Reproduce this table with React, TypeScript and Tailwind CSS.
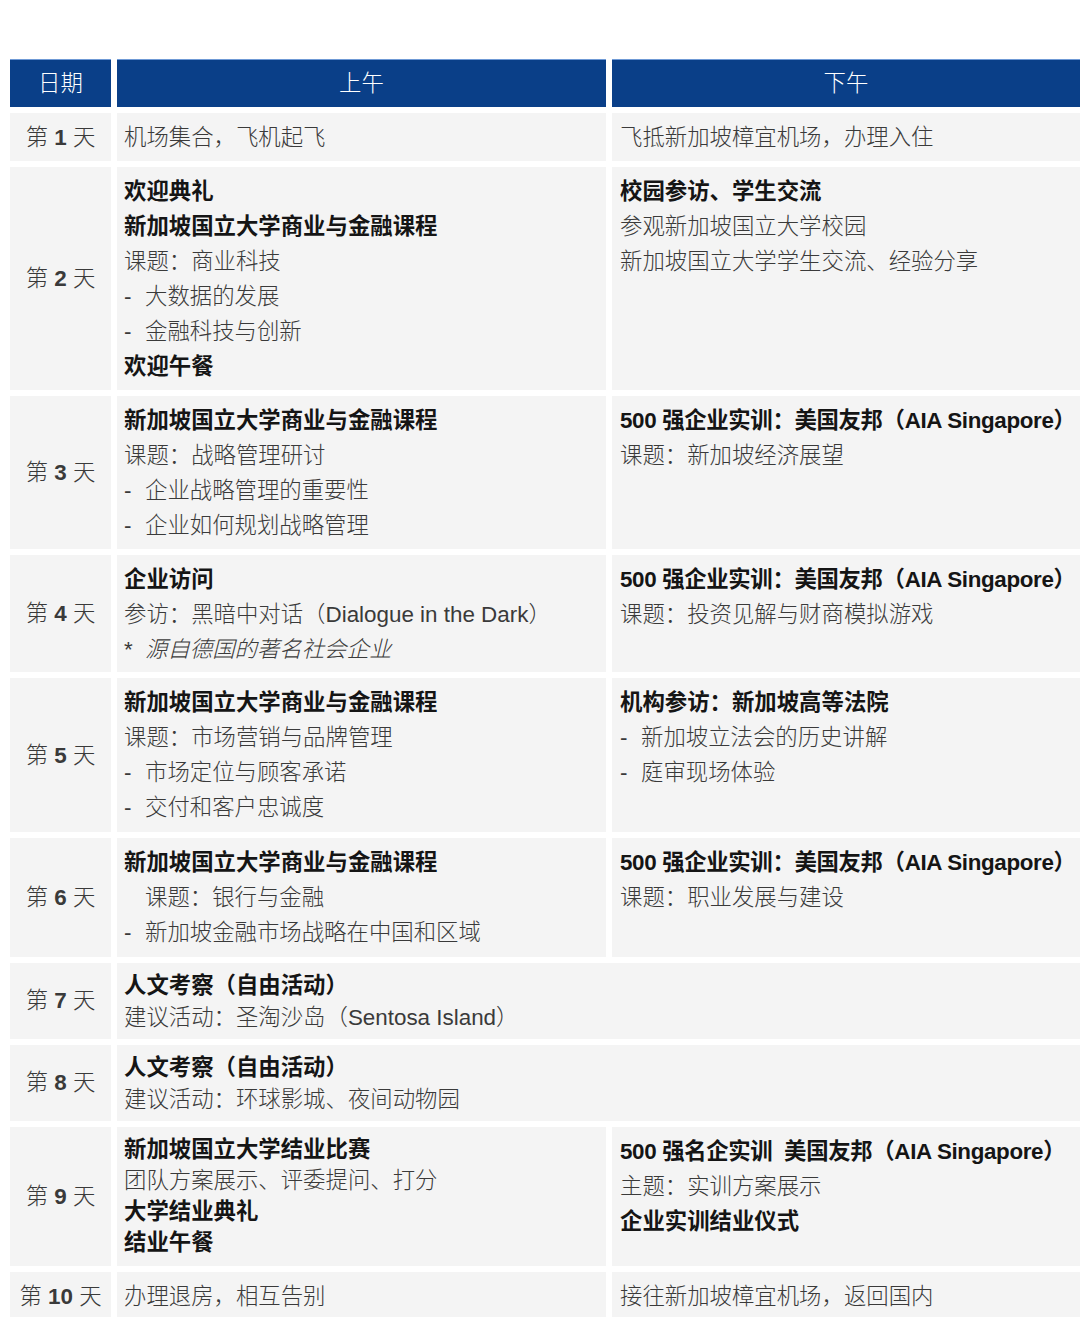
import React from "react";

type Line = { text: string; kind?: "bold" | "bullet" | "italic" | "indent" };

interface Row {
  day: number;
  h: string;
  lh: string;
  pmLh?: string;
  am: Line[];
  pm?: Line[];
}

const rows: Row[] = [
  {
    day: 1,
    h: "h-[48px]",
    lh: "leading-[35px]",
    am: [{ text: "机场集合，飞机起飞" }],
    pm: [{ text: "飞抵新加坡樟宜机场，办理入住" }],
  },
  {
    day: 2,
    h: "h-[223px]",
    lh: "leading-[35px]",
    am: [
      { text: "欢迎典礼", kind: "bold" },
      { text: "新加坡国立大学商业与金融课程", kind: "bold" },
      { text: "课题：商业科技" },
      { text: "大数据的发展", kind: "bullet" },
      { text: "金融科技与创新", kind: "bullet" },
      { text: "欢迎午餐", kind: "bold" },
    ],
    pm: [
      { text: "校园参访、学生交流", kind: "bold" },
      { text: "参观新加坡国立大学校园" },
      { text: "新加坡国立大学学生交流、经验分享" },
    ],
  },
  {
    day: 3,
    h: "h-[153px]",
    lh: "leading-[35px]",
    am: [
      { text: "新加坡国立大学商业与金融课程", kind: "bold" },
      { text: "课题：战略管理研讨" },
      { text: "企业战略管理的重要性", kind: "bullet" },
      { text: "企业如何规划战略管理", kind: "bullet" },
    ],
    pm: [
      { text: "500 强企业实训：美国友邦（AIA Singapore）", kind: "bold" },
      { text: "课题：新加坡经济展望" },
    ],
  },
  {
    day: 4,
    h: "h-[117px]",
    lh: "leading-[35px]",
    am: [
      { text: "企业访问", kind: "bold" },
      { text: "参访：黑暗中对话（Dialogue in the Dark）" },
      { text: "源自德国的著名社会企业", kind: "italic" },
    ],
    pm: [
      { text: "500 强企业实训：美国友邦（AIA Singapore）", kind: "bold" },
      { text: "课题：投资见解与财商模拟游戏" },
    ],
  },
  {
    day: 5,
    h: "h-[154px]",
    lh: "leading-[35px]",
    am: [
      { text: "新加坡国立大学商业与金融课程", kind: "bold" },
      { text: "课题：市场营销与品牌管理" },
      { text: "市场定位与顾客承诺", kind: "bullet" },
      { text: "交付和客户忠诚度", kind: "bullet" },
    ],
    pm: [
      { text: "机构参访：新加坡高等法院", kind: "bold" },
      { text: "新加坡立法会的历史讲解", kind: "bullet" },
      { text: "庭审现场体验", kind: "bullet" },
    ],
  },
  {
    day: 6,
    h: "h-[119px]",
    lh: "leading-[35px]",
    am: [
      { text: "新加坡国立大学商业与金融课程", kind: "bold" },
      { text: "课题：银行与金融", kind: "indent" },
      { text: "新加坡金融市场战略在中国和区域", kind: "bullet" },
    ],
    pm: [
      { text: "500 强企业实训：美国友邦（AIA Singapore）", kind: "bold" },
      { text: "课题：职业发展与建设" },
    ],
  },
  {
    day: 7,
    h: "h-[76px]",
    lh: "leading-[32px]",
    am: [
      { text: "人文考察（自由活动）", kind: "bold" },
      { text: "建议活动：圣淘沙岛（Sentosa Island）" },
    ],
  },
  {
    day: 8,
    h: "h-[76px]",
    lh: "leading-[32px]",
    am: [
      { text: "人文考察（自由活动）", kind: "bold" },
      { text: "建议活动：环球影城、夜间动物园" },
    ],
  },
  {
    day: 9,
    h: "h-[139px]",
    lh: "leading-[31px]",
    pmLh: "leading-[35px]",
    am: [
      { text: "新加坡国立大学结业比赛", kind: "bold" },
      { text: "团队方案展示、评委提问、打分" },
      { text: "大学结业典礼", kind: "bold" },
      { text: "结业午餐", kind: "bold" },
    ],
    pm: [
      { text: "500 强名企实训  美国友邦（AIA Singapore）", kind: "bold" },
      { text: "主题：实训方案展示" },
      { text: "企业实训结业仪式", kind: "bold" },
    ],
  },
  {
    day: 10,
    h: "h-[48px]",
    lh: "leading-[35px]",
    am: [{ text: "办理退房，相互告别" }],
    pm: [{ text: "接往新加坡樟宜机场，返回国内" }],
  },
];

function LineView({ line }: { line: Line }) {
  switch (line.kind) {
    case "bold": {
      // the long AIA lines only just fit the last column
      const tight = line.text.includes("AIA") ? "tracking-[-0.35px]" : "";
      return <div className={`font-bold text-[#151515] whitespace-pre ${tight}`}>{line.text}</div>;
    }
    case "bullet":
      return (
        <div className="flex whitespace-pre font-light">
          <span className="w-[21px]">-</span>
          <span>{line.text}</span>
        </div>
      );
    case "italic":
      return (
        <div className="flex whitespace-pre italic font-light">
          <span className="w-[21px] not-italic">*</span>
          <span>{line.text}</span>
        </div>
      );
    case "indent":
      return <div className="pl-[21px] whitespace-pre font-light">{line.text}</div>;
    default:
      return <div className="whitespace-pre font-light">{line.text}</div>;
  }
}

export default function App() {
  return (
    <div
      className="w-[1080px] h-[1317px] overflow-hidden bg-white pt-[59px] pl-[10px] text-[22.4px] text-[#3a3a3a]"
      style={{ fontFamily: '"Liberation Sans", "Noto Sans CJK SC", sans-serif' }}
    >
      <div className="flex flex-col gap-[6px]">
        <div className="grid grid-cols-[101px_489px_468px] gap-x-[6px] h-[48px] text-white font-light">
          <div className="bg-[#0a3f88] border-t border-[#6f9ad6] flex items-center justify-center">日期</div>
          <div className="bg-[#0a3f88] border-t border-[#6f9ad6] flex items-center justify-center">上午</div>
          <div className="bg-[#0a3f88] border-t border-[#6f9ad6] flex items-center justify-center">下午</div>
        </div>

        {rows.map((row) => (
          <div
            key={row.day}
            className={`grid grid-cols-[101px_489px_468px] gap-x-[6px] ${row.h} ${row.lh}`}
          >
            <div className="bg-[#f4f4f4] flex items-center justify-center text-[#3a3a3a] font-light whitespace-pre">
              第 <span className="font-bold">{row.day}</span> 天
            </div>
            <div
              className={`bg-[#f4f4f4] pl-[7px] flex flex-col ${
                row.am.length === 1 ? "justify-center" : "pt-[7px]"
              } ${row.pm ? "" : "col-span-2"}`}
            >
              {row.am.map((l, i) => (
                <LineView key={i} line={l} />
              ))}
            </div>
            {row.pm && (
              <div
                className={`bg-[#f4f4f4] pl-[8px] flex flex-col ${row.pmLh ?? ""} ${
                  row.pm.length === 1 ? "justify-center" : "pt-[7px]"
                }`}
              >
                {row.pm.map((l, i) => (
                  <LineView key={i} line={l} />
                ))}
              </div>
            )}
          </div>
        ))}
      </div>
    </div>
  );
}
